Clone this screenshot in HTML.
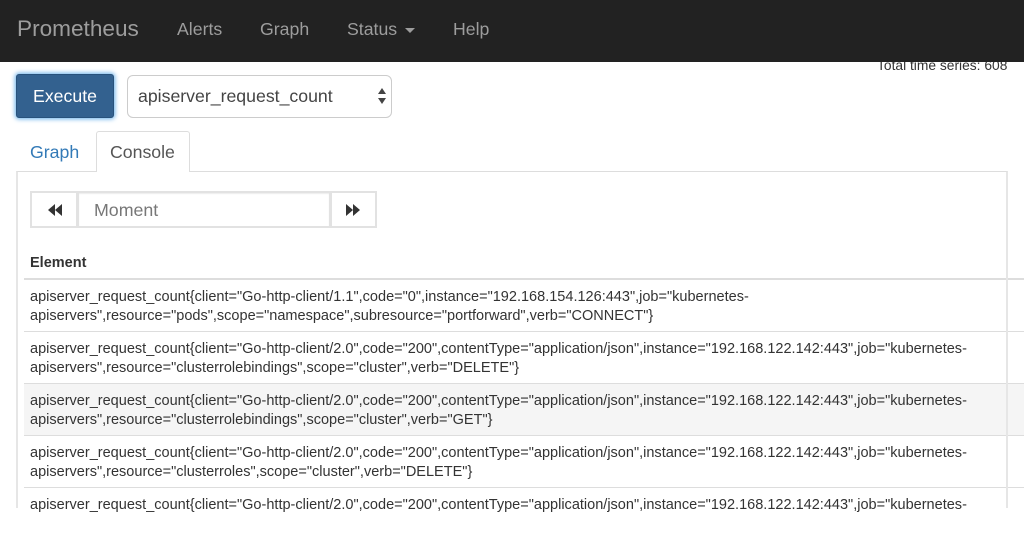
<!DOCTYPE html>
<html><head><meta charset="utf-8"><style>
html,body{margin:0;padding:0;background:#fff;}
body{width:1024px;height:508px;overflow:hidden;position:relative;font-family:"Liberation Sans",sans-serif;color:#333;}
.a{position:absolute;white-space:nowrap;}
.row{position:absolute;left:24px;width:1000px;box-sizing:border-box;border-top:1px solid #ddd;height:52px;}
.t{position:absolute;left:30px;font-size:14.52px;line-height:19px;color:#333;white-space:nowrap;}
.n{font-size:17.7px;line-height:20px;color:#9d9d9d;top:19px;}
</style></head><body>
<div class="a" style="left:877px;top:57px;font-size:13.8px;line-height:18px;color:#333;">Total time series: 608</div>
<div class="a" style="left:0;top:0;width:1024px;height:62px;background:#222;"></div>
<div class="a" style="left:17px;top:14px;font-size:22.6px;line-height:30px;color:#9d9d9d;">Prometheus</div>
<div class="a n" style="left:177px;">Alerts</div>
<div class="a n" style="left:260px;">Graph</div>
<div class="a n" style="left:347px;">Status</div>
<div class="a" style="left:405px;top:28px;width:0;height:0;border-left:5px solid transparent;border-right:5px solid transparent;border-top:5px solid #9d9d9d;"></div>
<div class="a n" style="left:453px;">Help</div>

<div class="a" style="left:16px;top:74px;width:98px;height:44px;box-sizing:border-box;background:#33618f;border:1px solid #28527c;border-radius:3px;box-shadow:0 0 5px 1px #66afe9;color:#fff;font-size:17.7px;line-height:42px;text-align:center;">Execute</div>
<div class="a" style="left:127px;top:75px;width:265px;height:43px;box-sizing:border-box;background:#fff;border:1px solid #ccc;border-radius:6px;color:#444;font-size:17.7px;line-height:41px;padding-left:10px;">apiserver_request_count</div>
<div class="a" style="left:378px;top:88px;width:0;height:0;border-left:4px solid transparent;border-right:4px solid transparent;border-bottom:6px solid #444;"></div>
<div class="a" style="left:378px;top:98px;width:0;height:0;border-left:4px solid transparent;border-right:4px solid transparent;border-top:6px solid #444;"></div>

<div class="a" style="left:16px;top:171px;width:992px;height:337px;box-sizing:border-box;border:2px solid #e6e6e6;border-top:1px solid #ddd;border-bottom:0;"></div>
<div class="a" style="left:30px;top:142px;font-size:17.7px;line-height:20px;color:#337ab7;">Graph</div>
<div class="a" style="left:96px;top:131px;width:94px;height:41px;box-sizing:border-box;background:#fff;border:1px solid #ddd;border-bottom:0;border-radius:3px 3px 0 0;color:#555;font-size:17.7px;line-height:41px;padding-left:13px;">Console</div>

<div class="a" style="left:30px;top:191px;width:48px;height:37px;box-sizing:border-box;border:2px solid #e2e2e2;background:#fff;"></div>
<svg class="a" style="left:48px;top:204px;" width="14" height="12" viewBox="0 0 14 12"><path d="M7 0v12L0 6zM14 0v12L7 6z" fill="#333"/></svg>
<div class="a" style="left:77px;top:191px;width:254px;height:37px;box-sizing:border-box;border:2px solid #e2e2e2;background:#fff;box-shadow:inset 0 1px 1px rgba(0,0,0,.08);color:#777;font-size:17.8px;line-height:35px;padding-left:15px;">Moment</div>
<div class="a" style="left:330px;top:191px;width:47px;height:37px;box-sizing:border-box;border:2px solid #e2e2e2;background:#fff;"></div>
<svg class="a" style="left:346px;top:204px;" width="14" height="12" viewBox="0 0 14 12"><path d="M0 0v12L7 6zM7 0v12L14 6z" fill="#333"/></svg>

<div class="a" style="left:30px;top:254px;font-size:14.5px;line-height:18px;font-weight:bold;color:#333;">Element</div>
<div class="a" style="left:24px;top:278px;width:1000px;height:2px;background:#ddd;"></div>

<div class="row" style="top:331px;"></div>
<div class="row" style="top:383px;background:#f5f5f5;"></div>
<div class="row" style="top:435px;"></div>
<div class="row" style="top:487px;"></div>
<div class="a" style="left:1006px;top:172px;width:2px;height:336px;background:#e6e6e6;"></div>

<div class="t" style="top:288px;">apiserver_request_count{client="Go-http-client/1.1",code="0",instance="192.168.154.126:443",job="kubernetes-<br>apiservers",resource="pods",scope="namespace",subresource="portforward",verb="CONNECT"}</div>
<div class="t" style="top:340px;">apiserver_request_count{client="Go-http-client/2.0",code="200",contentType="application/json",instance="192.168.122.142:443",job="kubernetes-<br>apiservers",resource="clusterrolebindings",scope="cluster",verb="DELETE"}</div>
<div class="t" style="top:392px;">apiserver_request_count{client="Go-http-client/2.0",code="200",contentType="application/json",instance="192.168.122.142:443",job="kubernetes-<br>apiservers",resource="clusterrolebindings",scope="cluster",verb="GET"}</div>
<div class="t" style="top:444px;">apiserver_request_count{client="Go-http-client/2.0",code="200",contentType="application/json",instance="192.168.122.142:443",job="kubernetes-<br>apiservers",resource="clusterroles",scope="cluster",verb="DELETE"}</div>
<div class="t" style="top:496px;">apiserver_request_count{client="Go-http-client/2.0",code="200",contentType="application/json",instance="192.168.122.142:443",job="kubernetes-</div>
</body></html>
